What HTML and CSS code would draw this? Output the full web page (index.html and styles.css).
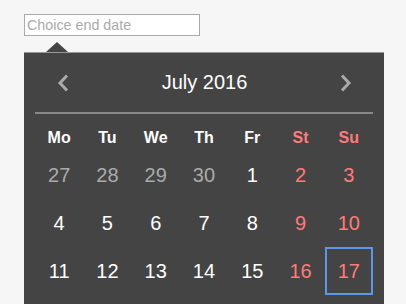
FILE: index.html
```html
<!DOCTYPE html>
<html lang="en">
<head>
  <meta charset="UTF-8" />
  <title>Date picker</title>
  <link rel="stylesheet" href="styles.css">
</head>
<body>
  <div class="picker">
    <input class="date-input" type="text" placeholder="Choice end date" />

    <!-- Calendar popup -->
    <div class="calendar">
      <div class="cal-header">
        <span class="nav-arrow">
          <svg width="12" height="18" viewBox="0 0 12 18"><polyline points="10,1.5 3,9 10,16.5" /></svg>
        </span>
        <span class="month">July 2016</span>
        <span class="nav-arrow">
          <svg width="12" height="18" viewBox="0 0 12 18"><polyline points="2,1.5 9,9 2,16.5" /></svg>
        </span>
      </div>

      <div class="weekdays">
        <span>Mo</span>
        <span>Tu</span>
        <span>We</span>
        <span>Th</span>
        <span>Fr</span>
        <span class="weekend">St</span>
        <span class="weekend">Su</span>
      </div>

      <div class="days">
        <span class="other">27</span>
        <span class="other">28</span>
        <span class="other">29</span>
        <span class="other">30</span>
        <span>1</span>
        <span class="weekend">2</span>
        <span class="weekend">3</span>

        <span>4</span>
        <span>5</span>
        <span>6</span>
        <span>7</span>
        <span>8</span>
        <span class="weekend">9</span>
        <span class="weekend">10</span>

        <span>11</span>
        <span>12</span>
        <span>13</span>
        <span>14</span>
        <span>15</span>
        <span class="weekend">16</span>
        <span class="weekend selected">17</span>
      </div>
    </div>
  </div>
</body>
</html>
```

FILE: styles.css
```css
:root {
  --page-bg: #f6f6f6;
  --panel-bg: #444444;
  --weekend: #ff7b7b;
  --muted: #aaaaaa;
  --select: #5b96e8;
}

body {
  margin: 0;
  background-color: var(--page-bg);
  font-family: "Liberation Sans", Arial, sans-serif;
  height: 304px;
  overflow: hidden;
}

.picker {
  padding: 14px 24px 0;
}

/* Input */
.date-input {
  display: block;
  box-sizing: border-box;
  width: 176px;
  height: 22px;
  margin: 0;
  padding: 0 2px;
  border: 1px solid #aaaaaa;
  background: #fff;
  font-family: inherit;
  font-size: 14.3px;
  outline: none;
}
.date-input::placeholder {
  color: #aaaaaa;
}

/* Calendar panel */
.calendar {
  position: relative;
  width: 360px;
  box-sizing: border-box;
  margin-top: 16px;
  padding: 0 11px 20px;
  background-color: var(--panel-bg);
  border-top: 1px solid #999999;
  color: #fff;
}
/* little pointer above the panel */
.calendar::before {
  content: "";
  position: absolute;
  left: 22px;
  top: -11px;
  border-left: 11px solid transparent;
  border-right: 11px solid transparent;
  border-bottom: 10px solid var(--panel-bg);
}

.cal-header {
  display: flex;
  justify-content: space-between;
  align-items: center;
  height: 59px;
  padding: 0 21px 0 22px;
  border-bottom: 2px solid #888888;
}
.month {
  font-size: 20px;
}
.nav-arrow {
  display: flex;
}
.nav-arrow polyline {
  fill: none;
  stroke: #aaaaaa;
  stroke-width: 3;
}

/* Weekday + day grid */
.weekdays,
.days {
  display: grid;
  grid-template-columns: repeat(7, 1fr);
  text-align: center;
}
.weekdays span {
  height: 37px;
  padding-top: 14px;
  box-sizing: border-box;
  line-height: 20px;
  font-size: 16px;
  font-weight: bold;
}
.days span {
  box-sizing: border-box;
  height: 48px;
  line-height: 48px;
  font-size: 20px;
}
.weekend {
  color: var(--weekend);
}
.days .other {
  color: var(--muted);
}
.days .selected {
  border: 2px solid var(--select);
  line-height: 44px;
}
```
